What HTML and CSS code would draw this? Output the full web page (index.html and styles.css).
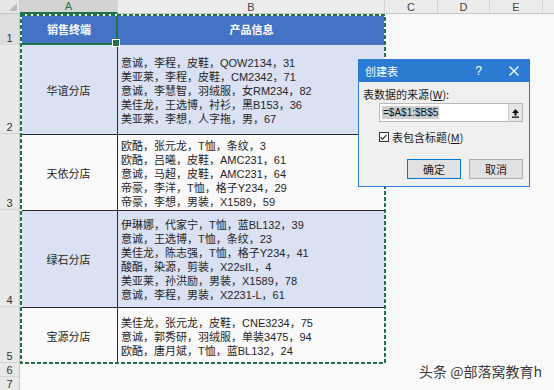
FILE: index.html
```html
<!DOCTYPE html>
<html lang="zh-CN">
<head>
<meta charset="utf-8">
<title>创建表</title>
<link rel="stylesheet" href="styles.css">
</head>
<body>
<div class="app">
  <div class="sheet">
    <div class="corner"><span class="tri"></span></div>
    <div class="ch ch-sel">A</div>
    <div class="ch">B</div>
    <div class="ch">C</div>
    <div class="ch">D</div>
    <div class="ch">E</div>
    <div class="ch ch-rest"></div>

    <div class="blank blank-right"></div>
    <div class="blank blank-bottom"></div>

    <div class="rh rh-sel">1</div>
    <div class="hd hd-a">销售终端</div>
    <div class="hd hd-b">产品信息</div>

    <div class="rh">2</div>
    <div class="store band">华谊分店</div>
    <div class="info band">
      <span>意诚，李程，皮鞋，QOW2134，31</span>
      <span>美亚莱，李程，皮鞋，CM2342，71</span>
      <span>意诚，李慧智，羽绒服，女RM234，82</span>
      <span>美佳龙，王选博，衬衫，黑B153，36</span>
      <span>美亚莱，李想，人字拖，男，67</span>
    </div>

    <div class="rh">3</div>
    <div class="store ruled">天依分店</div>
    <div class="info ruled">
      <span>欧酷，张元龙，T恤，条纹，3</span>
      <span>欧酷，吕曦，皮鞋，AMC231，61</span>
      <span>意诚，马超，皮鞋，AMC231，64</span>
      <span>帝豪，李洋，T恤，格子Y234，29</span>
      <span>帝豪，李想，男装，X1589，59</span>
    </div>

    <div class="rh">4</div>
    <div class="store band ruled">绿石分店</div>
    <div class="info band ruled">
      <span>伊琳娜，代家宁，T恤，蓝BL132，39</span>
      <span>意诚，王选博，T恤，条纹，23</span>
      <span>美佳龙，陈志强，T恤，格子Y234，41</span>
      <span>酸酯，染源，剪装，X22sIL，4</span>
      <span>美亚莱，孙洪励，男装，X1589，78</span>
      <span>意诚，李程，男装，X2231-L，61</span>
    </div>

    <div class="rh">5</div>
    <div class="store ruled">宝源分店</div>
    <div class="info ruled">
      <span>美佳龙，张元龙，皮鞋，CNE3234，75</span>
      <span>意诚，郭秀研，羽绒服，单装3475，94</span>
      <span>欧酷，唐月斌，T恤，蓝BL132，24</span>
    </div>

    <div class="rh">6</div>
    <div class="rh">7</div>
  </div>

  <svg class="ants" width="366" height="350" viewBox="0 0 366 350">
    <rect x="1" y="1" width="364" height="348" fill="none" stroke="#ffffff" stroke-width="2"/>
    <rect x="1" y="1" width="364" height="348" fill="none" stroke="#217346" stroke-width="2" stroke-dasharray="4 2"/>
  </svg>

  <div class="dialog">
    <div class="titlebar">
      <span class="title">创建表</span>
      <span class="help">?</span>
      <svg class="close" width="10" height="10" viewBox="0 0 10 10">
        <path d="M0.5 0.5 L9.5 9.5 M9.5 0.5 L0.5 9.5" stroke="#ffffff" stroke-width="1.2" fill="none"/>
      </svg>
    </div>
    <div class="dlg-body">
      <div class="dlg-label">表数据的来源(<u>W</u>):</div>
      <div class="range">
        <span class="range-field"><span class="range-text">=$A$1:$B$5</span></span>
        <span class="range-btn">
          <svg width="9" height="10" viewBox="0 0 9 10">
            <path d="M4.5 1 L8 5 L5.6 5 L5.6 7.5 L3.4 7.5 L3.4 5 L1 5 Z" fill="#111"/>
            <rect x="1" y="8.5" width="7" height="1.3" fill="#111"/>
          </svg>
        </span>
      </div>
      <div class="check-row">
        <span class="checkbox">
          <svg width="10" height="10" viewBox="0 0 10 10">
            <path d="M1.8 5.2 L4 7.4 L8.4 2.6" stroke="#222" stroke-width="1.2" fill="none"/>
          </svg>
        </span>
        <span class="check-label">表包含标题(<u>M</u>)</span>
      </div>
      <div class="buttons">
        <span class="btn btn-default">确定</span>
        <span class="btn">取消</span>
      </div>
    </div>
  </div>

  <div class="watermark">头条 @部落窝教育h</div>
</div>
</body>
</html>
```

FILE: styles.css
```css
* { box-sizing: border-box; }

html, body {
  margin: 0;
  padding: 0;
  background: #f9f9f9;
  overflow: hidden;
}

.app {
  position: relative;
  width: 554px;
  height: 390px;
  overflow: hidden;
  font-family: "Liberation Sans", "Noto Sans CJK SC", sans-serif;
  font-size: 11px;
  color: #262626;
}

.sheet {
  display: grid;
  grid-template-columns: 20px 98px 267px 53px 52px 53px 11px;
  grid-template-rows: 14px 31px 89px 76px 97px 56px 14px 14px;
}

.corner {
  background: #e6e6e6;
  border-right: 1px solid #cfcfcf;
  border-bottom: 1px solid #c6c6c6;
  display: flex;
  justify-content: flex-end;
  align-items: flex-end;
  padding: 0 2px 2px 0;
}

.tri {
  width: 0;
  height: 0;
  border-left: 8px solid transparent;
  border-bottom: 8px solid #bdbdbd;
}

.ch {
  background: #ececec;
  border-right: 1px solid #d4d4d4;
  border-bottom: 1px solid #c6c6c6;
  color: #444;
  display: flex;
  align-items: center;
  justify-content: center;
  font-size: 11px;
  line-height: 12px;
}

.ch-sel {
  background: #d3d3d3;
  color: #217346;
  border-bottom: 2px solid #217346;
}

.ch-rest { border-right: none; }

.rh {
  background: #e9e9e9;
  border-right: 1px solid #c6c6c6;
  border-bottom: 1px solid #d6d6d6;
  color: #333;
  display: flex;
  align-items: flex-end;
  justify-content: center;
  font-size: 11px;
  line-height: 12px;
}

.rh-sel { background: #dedede; }

.blank { background: #f9f9f9; }

.blank-right {
  grid-column: 4 / 8;
  grid-row: 2 / 9;
}

.blank-bottom {
  grid-column: 2 / 4;
  grid-row: 7 / 9;
}

.hd {
  background: #4472c4;
  color: #ffffff;
  font-weight: bold;
  display: flex;
  align-items: center;
  justify-content: center;
  font-size: 11px;
}

.hd-a {
  position: relative;
  border: 2px solid #217346;
  padding-bottom: 1px;
}

.hd-a::after {
  content: "";
  position: absolute;
  right: -4px;
  bottom: -4px;
  width: 6px;
  height: 6px;
  background: #217346;
  border: 1px solid #ffffff;
}

.hd-b { padding-bottom: 1px; }

.store {
  background: #fafafa;
  border-right: 1px solid #2a2a2a;
  display: flex;
  align-items: center;
  justify-content: center;
  font-size: 11px;
}

.info {
  background: #fafafa;
  display: flex;
  flex-direction: column;
  justify-content: center;
  padding: 2px 0 0 3px;
  font-size: 11px;
  line-height: 14px;
  white-space: nowrap;
}

.band { background: #d9e1f2; }

.ruled { border-top: 1px solid #2a2a2a; }

.ants {
  position: absolute;
  left: 20px;
  top: 14px;
}

.dialog {
  position: absolute;
  left: 358px;
  top: 59px;
  width: 172px;
  height: 128px;
  border: 1px solid #2b7bd3;
  background: #f0f0f0;
  display: flex;
  flex-direction: column;
  font-family: "Noto Sans CJK SC", "Liberation Sans", sans-serif;
  font-size: 11px;
  color: #1a1a1a;
}

.titlebar {
  height: 22px;
  background: #2b7bd3;
  color: #ffffff;
  display: flex;
  align-items: center;
  padding: 0 10px 0 6px;
}

.title {
  flex: 1;
  font-size: 11px;
}

.help {
  font-family: "Liberation Sans", sans-serif;
  font-size: 12px;
  margin-right: 27px;
}

.dlg-body {
  flex: 1;
  display: flex;
  flex-direction: column;
  padding: 0 6px 0 4px;
}

.dlg-label {
  margin-top: 6px;
  height: 12px;
  line-height: 12px;
}

.range {
  margin: 3px 0 0 16px;
  height: 19px;
  background: #ffffff;
  border: 1px solid #b9b9b9;
  display: flex;
  align-items: stretch;
}

.range-field {
  flex: 1;
  display: flex;
  align-items: center;
  padding-left: 2px;
}

.range-text {
  font-family: "Liberation Sans", sans-serif;
  font-size: 10px;
  line-height: 13px;
  color: #111;
  background: #cdcdcd;
  padding: 0 1px;
}

.range-btn {
  width: 14px;
  background: #e5e5e5;
  border-left: 1px solid #cfcfcf;
  display: flex;
  align-items: center;
  justify-content: center;
}

.check-row {
  margin: 9px 0 0 16px;
  height: 12px;
  display: flex;
  align-items: center;
  gap: 3px;
}

.checkbox {
  width: 10px;
  height: 10px;
  border: 1px solid #333;
  background: #ffffff;
  display: flex;
}

.checkbox svg { margin: -1px 0 0 -1px; }

.buttons {
  margin-top: 16px;
  display: flex;
  justify-content: flex-end;
  gap: 8px;
}

.btn {
  width: 54px;
  height: 20px;
  background: #e1e1e1;
  border: 1px solid #adadad;
  display: flex;
  align-items: center;
  justify-content: center;
}

.btn-default { border: 1px solid #0078d7; }

.watermark {
  position: absolute;
  left: 419px;
  top: 363px;
  font-family: "Noto Sans CJK SC", sans-serif;
  font-size: 14px;
  line-height: 17px;
  color: #3a3a3a;
  text-shadow: 0 0 2px #ffffff, 0 0 1px #ffffff;
  white-space: nowrap;
}
```
